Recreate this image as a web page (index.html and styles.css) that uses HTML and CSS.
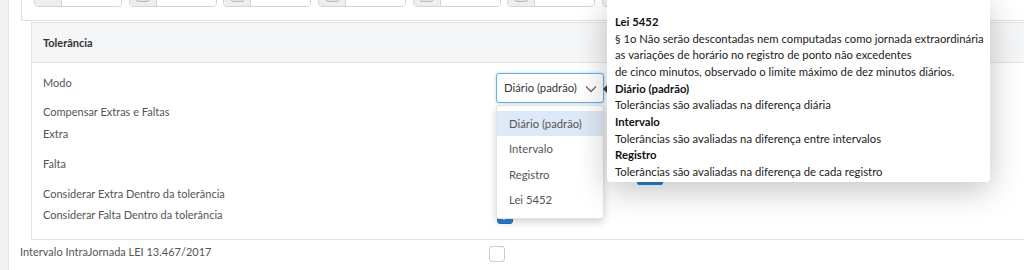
FILE: index.html
```html
<!DOCTYPE html>
<html lang="pt-BR">

<head>
    <meta charset="UTF-8" />
    <title>Tolerância</title>
    <link rel="stylesheet" href="styles.css">
</head>

<body>

    <div class="page">
        <div class="card-top">
            <div class="groups">
                <div class="igroup"><span class="addon"></span><span class="field"></span></div>
                <div class="igroup"><span class="addon"><i class="mini"></i></span><span class="field"></span></div>
                <div class="igroup"><span class="addon"><i class="mini"></i></span><span class="field"></span></div>
                <div class="igroup"><span class="addon"><i class="mini"></i></span><span class="field"></span></div>
                <div class="igroup"><span class="addon"><i class="mini"></i></span><span class="field"></span></div>
                <div class="igroup"><span class="addon"><i class="mini"></i></span><span class="field"></span></div>
                <div class="igroup"><span class="addon"><i class="mini"></i></span><span class="field"></span></div>
                <div class="igroup"><span class="addon"><i class="mini"></i></span><span class="field"></span></div>
            </div>
        </div>

        <div class="panel">
            <div class="panel-head">Tolerância</div>
            <div class="panel-body">
                <div class="row r-modo">
                    <label class="lbl">Modo</label>
                    <div class="ctrl">
                        <div class="select">
                            <span>Diário (padrão)</span>
                            <svg class="chev" width="12" height="8" viewBox="0 0 12 8">
                                <path d="M1 1.5 L6 6.5 L11 1.5" fill="none" stroke="#666" stroke-width="1.3" />
                            </svg>
                            <ul class="options">
                                <li class="active">Diário (padrão)</li>
                                <li>Intervalo</li>
                                <li>Registro</li>
                                <li>Lei 5452</li>
                            </ul>
                        </div>
                    </div>
                </div>
                <div class="row r-comp">
                    <label class="lbl">Compensar Extras e Faltas</label>
                    <div class="ctrl"><span class="check"></span></div>
                </div>
                <div class="row r-extra">
                    <label class="lbl">Extra</label>
                    <div class="ctrl"></div>
                </div>
                <div class="row r-falta">
                    <label class="lbl">Falta</label>
                    <div class="ctrl"><span class="blue-btn"></span></div>
                </div>
                <div class="row r-cons">
                    <label class="lbl">Considerar Extra Dentro da tolerância</label>
                    <div class="ctrl"><span class="check on"></span></div>
                </div>
                <div class="row r-cons">
                    <label class="lbl">Considerar Falta Dentro da tolerância</label>
                    <div class="ctrl">
                        <span class="check on">
                            <svg width="16" height="16" viewBox="0 0 16 16">
                                <path d="M4 8 L7 11 L12 5" fill="none" stroke="#fff" stroke-width="1.6" />
                            </svg>
                        </span>
                    </div>
                </div>
            </div>
        </div>

        <div class="row r-intra">
            <label class="lbl">Intervalo IntraJornada LEI 13.467/2017</label>
            <div class="ctrl"><span class="check"></span></div>
        </div>
    </div>

    <!-- tooltip do campo Modo -->
    <div class="tip">
        <b>Lei 5452</b>
        <p>§ 1o Não serão descontadas nem computadas como jornada extraordinária</p>
        <p>as variações de horário no registro de ponto não excedentes</p>
        <p>de cinco minutos, observado o limite máximo de dez minutos diários.</p>
        <b>Diário (padrão)</b>
        <p>Tolerâncias são avaliadas na diferença diária</p>
        <b>Intervalo</b>
        <p>Tolerâncias são avaliadas na diferença entre intervalos</p>
        <b>Registro</b>
        <p>Tolerâncias são avaliadas na diferença de cada registro</p>
    </div>

</body>

</html>
```

FILE: styles.css
```css
body {
    margin: 0;
    background: #f2f2f2;
    font-family: Lato, "Noto Sans", sans-serif;
    font-size: 11px;
    color: #555;
    overflow: hidden;
}

.page {
    margin-left: 8px;
    background: #fff;
    border-left: 1px solid #e6e6e6;
    padding-left: 11px;
    height: 270px;
    overflow: hidden;
}

/* bloco de cima (cortado pelo scroll) */
.card-top {
    margin-top: -38px;
    margin-left: 1px;
    border-left: 1px solid #e0e0e0;
    border-bottom: 1px solid #e0e0e0;
    padding: 11px 0 13px 12px;
}

.groups {
    display: flex;
    gap: 6.7px;
    overflow: hidden;
}

.igroup {
    display: flex;
    width: 88px;
    height: 34px;
    flex: none;
    border: 1px solid #d4d4d4;
    border-radius: 4px;
    box-sizing: border-box;
    overflow: hidden;
}

.addon {
    width: 26px;
    background: #eee;
    border-right: 1px solid #d4d4d4;
    display: flex;
    justify-content: center;
}

.mini {
    width: 13px;
    height: 13px;
    margin-top: 15px;
    border: 1px solid #bbb;
    border-radius: 2px;
    background: #e2e2e2;
    box-sizing: border-box;
}

.field {
    flex: 1;
    background: #fff;
}

/* painel Tolerância */
.panel {
    margin-left: 11px;
    margin-top: 1px;
    border: 1px solid #e2e2e2;
    border-right: none;
}

.panel-head {
    background: #f5f6f7;
    border-bottom: 1px solid #e4e4e4;
    height: 39px;
    line-height: 39px;
    padding-left: 11px;
    font-weight: bold;
    color: #333;
}

.panel-body {
    padding: 10px 0 11px 11px;
}

.row {
    display: flex;
}

.lbl {
    width: 453px;
    flex: none;
    line-height: 16px;
}

.ctrl {
    position: relative;
}

.r-modo {
    height: 31px;
}

.r-modo .lbl {
    padding-top: 2px;
}

.r-comp {
    height: 22px;
}

.r-extra,
.r-falta {
    height: 30px;
}

.r-cons {
    height: 21px;
}

.r-intra {
    margin-top: 4px;
    height: 20px;
}

.r-intra .lbl {
    width: 469px;
}

.check {
    display: block;
    width: 16px;
    height: 16px;
    margin: 1px 0 0 1px;
    border: 1px solid #ccc;
    border-radius: 3px;
    box-sizing: border-box;
    background: #fff;
}

.check.on {
    background: #2d7fd3;
    border-color: #2470c0;
}

.check svg {
    display: block;
    margin: -1px;
}

.r-intra .check {
    margin: 2px 0 0;
}

.blue-btn {
    position: absolute;
    left: 141px;
    top: 14px;
    width: 26px;
    height: 15px;
    background: #2d7fd3;
    border-radius: 2px;
}

/* select aberto */
.select {
    position: relative;
    width: 108px;
    height: 30px;
    border: 1px solid #66afe9;
    border-radius: 3px;
    box-sizing: border-box;
    box-shadow: 0 0 3px rgba(102, 175, 233, .5);
    background: #fff;
    padding-left: 7px;
    line-height: 28px;
    font-size: 11.3px;
    color: #333;
}

.chev {
    position: absolute;
    right: 6px;
    top: 11px;
}

.options {
    position: absolute;
    left: -1px;
    top: 31px;
    width: 108px;
    margin: 0;
    padding: 5px 0 6px;
    list-style: none;
    background: #fff;
    border: 1px solid #e2e2e2;
    border-radius: 3px;
    box-shadow: 0 3px 8px rgba(0, 0, 0, .18);
    box-sizing: border-box;
    z-index: 2;
}

.options li {
    height: 25.3px;
    line-height: 25.3px;
    padding-left: 12px;
    color: #555;
}

.options li.active {
    background: #dde9f6;
}

/* tooltip */
.tip {
    position: absolute;
    left: 607px;
    top: 0;
    width: 383px;
    height: 182px;
    box-sizing: border-box;
    padding: 14px 8px 0;
    background: #fff;
    border-radius: 0 0 4px 4px;
    box-shadow: 0 8px 32px rgba(0, 0, 0, .24);
    font-size: 11.3px;
    line-height: 16.67px;
    white-space: nowrap;
    color: #222;
    z-index: 3;
}

.tip::before {
    content: "";
    position: absolute;
    left: -4px;
    top: 85px;
    border-style: solid;
    border-width: 4px 4px 4px 0;
    border-color: transparent #333 transparent transparent;
}

.tip b {
    display: block;
    color: #111;
}

.tip p {
    margin: 0;
}
```
